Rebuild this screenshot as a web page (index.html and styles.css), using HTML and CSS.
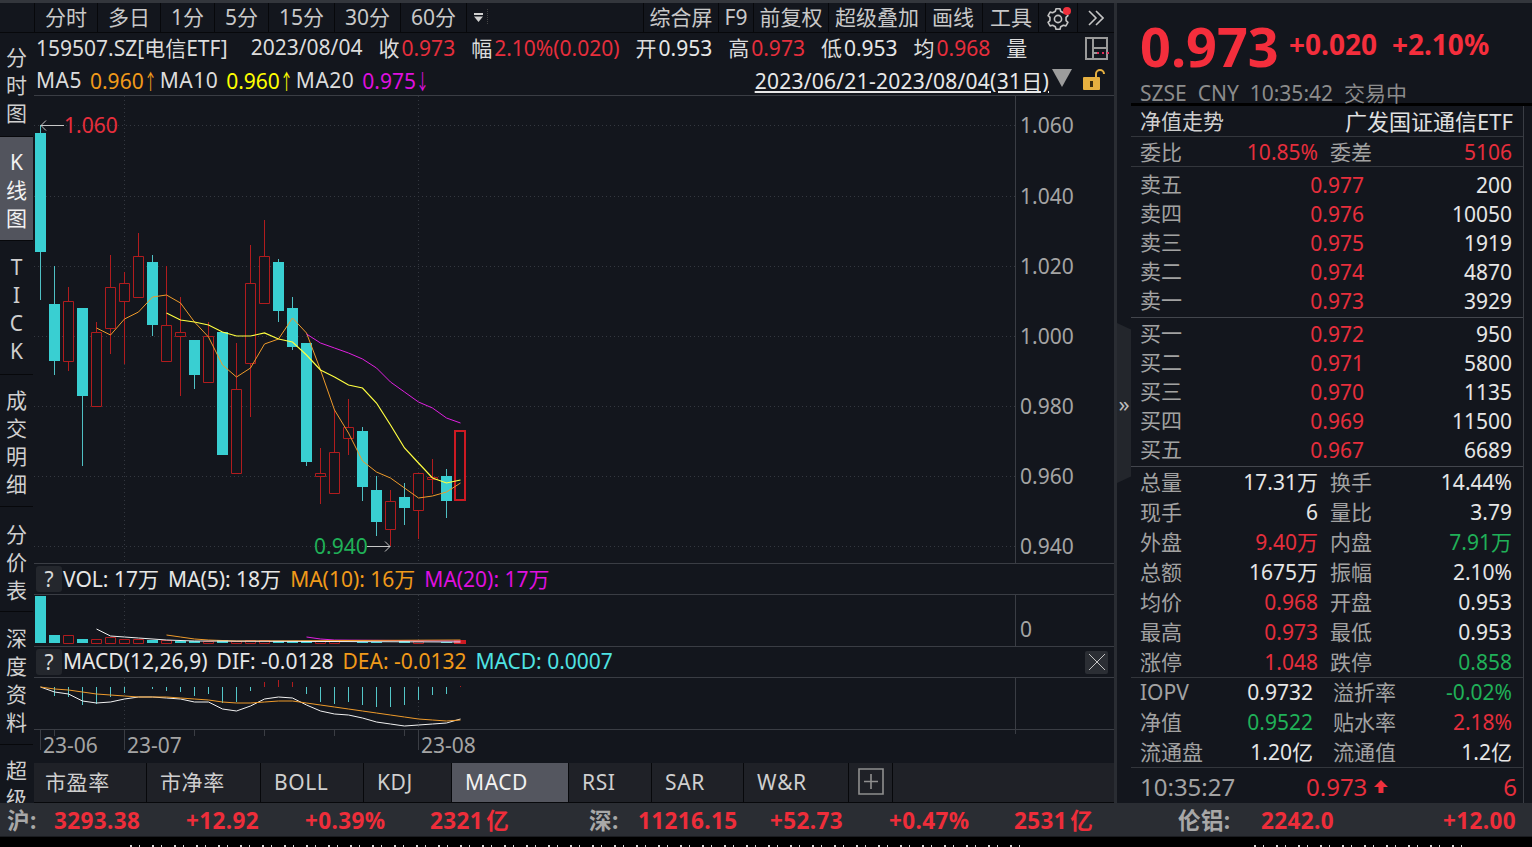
FILE: index.html
```html
<!DOCTYPE html>
<html lang="zh-CN">
<head>
<meta charset="utf-8">
<title>159507.SZ 电信ETF</title>
<link rel="stylesheet" href="styles.css">
</head>
<body>
<div class="app">
  <div class="titlestrip"></div>
  <div class="workspace">
    <nav class="sidebar">
      <div class="side-head"></div>
      <div class="side-item s-first">分<br>时<br>图</div>
      <div class="side-item active">K<br>线<br>图</div>
      <div class="side-item s-tick">T<br>I<br>C<br>K</div>
      <div class="side-item">成<br>交<br>明<br>细</div>
      <div class="side-item s-price">分<br>价<br>表</div>
      <div class="side-item s-depth">深<br>度<br>资<br>料</div>
      <div class="side-item">超<br>级</div>
    </nav>

    <section class="chart-col">
      <div class="toolbar">
        <span class="tab">分时</span><span class="tab">多日</span><span class="tab">1分</span><span class="tab">5分</span><span class="tab">15分</span><span class="tab">30分</span><span class="tab">60分</span>
        <span class="tab-more"><svg width="9" height="9" viewBox="0 0 9 9"><rect x="0" y="0" width="9" height="2" fill="#d0d0d0"/><path d="M0 3.5h9L4.5 9z" fill="#d0d0d0"/></svg></span>
        <span class="tab-dots"></span>
        <span class="tool-gap"></span>
        <span class="tab tool">综合屏</span><span class="tab tool">F9</span><span class="tab tool">前复权</span><span class="tab tool t-wide">超级叠加</span><span class="tab tool t-draw">画线</span><span class="tab tool t-tools">工具</span>
        <span class="tab icon-tab gear">
          <svg width="26" height="26" viewBox="0 0 26 26"><g transform="translate(1 2)"><path d="M14 1.69L10 1.69 9.33 4.25 6.62 5.81 4.08 5.11 2.07 8.58 3.95 10.44 3.95 13.56 2.07 15.42 4.08 18.89 6.62 18.19 9.33 19.75 10 22.31 14 22.31 14.67 19.75 17.38 18.19 19.92 18.89 21.93 15.42 20.05 13.56 20.05 10.44 21.93 8.58 19.92 5.11 17.38 5.81 14.67 4.25Z" fill="none" stroke="#c4c4c4" stroke-width="1.6" stroke-linejoin="round"/><circle cx="12" cy="12" r="3.6" fill="none" stroke="#c4c4c4" stroke-width="1.6"/></g><circle cx="22" cy="6" r="4" fill="#f0303c"/></svg>
        </span>
        <span class="tab icon-tab more">
          <svg width="16" height="16" viewBox="0 0 16 16"><path d="M1 1l7 7-7 7M8 1l7 7-7 7" fill="none" stroke="#c4c4c4" stroke-width="1.6"/></svg>
        </span>
      </div>

      <div class="inforow">
        <span class="sym">159507.SZ[电信ETF]</span>
        <span class="date">2023/08/04</span>
        <span>收<b class="red">0.973</b></span>
        <span>幅<b class="red">2.10%(0.020)</b></span>
        <span>开<b>0.953</b></span>
        <span>高<b class="red">0.973</b></span>
        <span>低<b>0.953</b></span>
        <span>均<b class="red">0.968</b></span>
        <span>量</span>
        <svg class="layout-icon" width="26" height="24" viewBox="0 0 26 24"><path d="M1 1h21v21H1zM8 1v21M8 11h14M8 16h5" fill="none" stroke="#9a9a9a" stroke-width="2"/><path d="M12 16h13" stroke="#e0305a" stroke-width="2" stroke-dasharray="2 3"/></svg>
      </div>

      <div class="marow">
        <span class="ma-name">MA5</span><span class="orange">0.960<i class="ar">↑</i></span>
        <span class="ma-name">MA10</span><span class="yellow">0.960<i class="ar">↑</i></span>
        <span class="ma-name">MA20</span><span class="magenta">0.975<i class="ar">↓</i></span>
        <span class="range">2023/06/21-2023/08/04(31日)</span>
        <svg class="tri" width="22" height="18" viewBox="0 0 22 18"><path d="M1 0h20L11 18z" fill="#9c9c9c"/></svg>
        <svg class="lock" width="24" height="22" viewBox="0 0 24 22"><path d="M13 9V5a4 4 0 0 1 8 0" fill="none" stroke="#e6b040" stroke-width="2"/><rect x="0" y="8" width="17" height="13" rx="1" fill="#e6b040"/><rect x="7" y="12" width="3" height="6" fill="#3a2c10"/></svg>
      </div>

      <svg class="pane pane-main" viewBox="34 96 1080 467" width="1080" height="467">
        <path class="grid" d="M34 125.5H1015M34 196.5H1015M34 266.5H1015M34 336.5H1015M34 406.5H1015M34 476.5H1015M34 546.5H1015M124.5 96V563M418.5 96V563"/>
        <path class="axis" d="M1015.5 96V563"/>
        <g class="axis-label">
          <text x="1020" y="133">1.060</text><text x="1020" y="204">1.040</text><text x="1020" y="274">1.020</text><text x="1020" y="344">1.000</text><text x="1020" y="414">0.980</text><text x="1020" y="484">0.960</text><text x="1020" y="554">0.940</text>
        </g>
        <path class="wick-up" d="M68.5 287V371M96.5 322V406M110.5 255V354M124.5 272V364M138.5 233V297M166.5 266V361M180.5 297V396M208.5 322V382M236.5 343V473M250.5 245V417M264.5 220V303M320.5 448V504M334.5 410V493M348.5 399V455M390.5 490V546M418.5 473V539M432.5 459V494"/>
        <path class="wick-down" d="M40.5 125V300M54.5 266V375M82.5 308V466M152.5 255V336M194.5 340V389M278.5 259V322M292.5 297V350M306.5 343V466M362.5 427V501M376.5 476V536M404.5 483V525M446.5 469V518"/>
        <path class="body-down" d="M35 133h11V252H35zM49 304h11V361H49zM77 308h11V396H77zM147 262h11V325H147zM189 340h11V375H189zM217 332h11V455H217zM273 262h11V311H273zM287 308h11V347H287zM301 343h11V462H301zM357 431h11V487H357zM371 490h11V522H371zM399 497h11V508H399zM441 476h11V501H441z"/>
        <path class="body-up" d="M63.5 301.5h10V361.5h-10zM91.5 332.5h10V406.5h-10zM105.5 287.5h10V328.5h-10zM119.5 283.5h10V301.5h-10zM133.5 256.5h10V297.5h-10zM161.5 325.5h10V361.5h-10zM175.5 332.5h10V336.5h-10zM203.5 336.5h10V382.5h-10zM231.5 389.5h10V473.5h-10zM245.5 283.5h10V363.5h-10zM259.5 256.5h10V303.5h-10zM315.5 473.5h10V476.5h-10zM329.5 452.5h10V493.5h-10zM343.5 427.5h10V438.5h-10zM385.5 501.5h10V529.5h-10zM413.5 473.5h10V510.5h-10zM427.5 477.5h10V479.5h-10z"/>
        <rect class="body-last" x="455" y="431" width="10" height="69"/>
        <polyline class="line-o" points="96.5,328 110.5,335 124.5,319 138.5,312 152.5,297 166.5,295 180.5,303 194.5,322 208.5,337 222.5,365 236.5,377 250.5,368 264.5,344 278.5,339 292.5,318 306.5,333 320.5,370 334.5,410 348.5,433 362.5,461 376.5,472 390.5,478 404.5,488 418.5,498 432.5,496 446.5,492 460.5,483"/>
        <polyline class="line-y" points="166.5,313 180.5,320 194.5,322 208.5,325 222.5,332 236.5,336 250.5,336 264.5,333 278.5,339 292.5,342 306.5,355 320.5,370 334.5,377 348.5,385 362.5,388 376.5,403 390.5,425 404.5,448 418.5,463 432.5,478 446.5,483 460.5,480"/>
        <polyline class="line-m" points="306.5,334 320.5,343 334.5,348 348.5,353 362.5,359 376.5,368 390.5,382 404.5,392 418.5,402 432.5,408 446.5,418 460.5,423"/>
        <path class="note-arrow" d="M64 125.5H41M46 120.5l-5 5 5 5"/>
        <text class="note red-fill" x="64" y="133">1.060</text>
        <text class="note green-fill" x="314" y="554">0.940</text>
        <path class="note-arrow" d="M367 546.5H390M385 541.5l5 5-5 5"/>
      </svg>

      <div class="pane-head">
        <span class="q">?</span>
        <span class="vol">VOL: 17万</span><span>MA(5): 18万</span><span class="orange">MA(10): 16万</span><span class="magenta">MA(20): 17万</span>
      </div>
      <svg class="pane pane-vol" viewBox="34 595 1080 51" width="1080" height="51">
        <path class="grid" d="M124.5 595V646M418.5 595V646"/>
        <path class="axis" d="M1015.5 595V646"/>
        <text class="axis-label" x="1020" y="637">0</text>
        <path class="body-down" d="M35 596h11V643H35zM49 635h11V643H49zM77 639h11V643H77zM147 640h11V643H147zM175 641h11V643H175zM189 641h11V643H189zM217 640h11V643H217zM273 641h11V643H273zM287 641h11V643H287zM301 641h11V643H301zM357 642h11V643H357zM371 642h11V643H371zM399 641h11V643H399zM441 642h11V643H441z"/>
        <path class="body-up" d="M63.5 635.5h10V643.5h-10zM91.5 639.5h10V643.5h-10zM105.5 637.5h10V643.5h-10zM119.5 639.5h10V643.5h-10zM133.5 639.5h10V643.5h-10zM161.5 640.5h10V643.5h-10zM203.5 641.5h10V643.5h-10zM231.5 641.5h10V643.5h-10zM245.5 640.5h10V643.5h-10zM259.5 640.5h10V643.5h-10zM315.5 641.5h10V643.5h-10zM329.5 641.5h10V643.5h-10zM413.5 641.5h10V643.5h-10z"/>
        <rect class="body-last" x="455" y="641" width="10" height="2"/>
        <polyline class="line-m" points="306.5,637 320.5,639 334.5,640 460.5,641"/>
        <polyline class="line-o" points="166.5,635 180.5,637 194.5,639 208.5,640 236.5,641 460.5,640"/>
        <polyline class="line-w" points="96.5,629 110.5,636 124.5,637 138.5,638 166.5,640 194.5,641 460.5,642"/>
      </svg>

      <div class="pane-head">
        <span class="q">?</span>
        <span class="vol">MACD(12,26,9)</span><span>DIF: -0.0128</span><span class="orange">DEA: -0.0132</span><span class="cyan">MACD: 0.0007</span>
        <span class="close"><svg width="18" height="18" viewBox="0 0 18 18"><path d="M1 1l16 16M17 1L1 17" stroke="#c4c4c4"/></svg></span>
      </div>
      <svg class="pane pane-macd" viewBox="34 678 1080 51" width="1080" height="51">
        <path class="grid" d="M124.5 678V729M418.5 678V729"/>
        <path class="axis" d="M1015.5 678V729"/>
        <path class="hist-down" d="M54.5 687V696M68.5 687V697M82.5 687V705M96.5 687V704M110.5 687V697M124.5 687V693M152.5 687V689M166.5 687V691M180.5 687V692M194.5 687V696M208.5 687V694M222.5 687V703M236.5 687V702M250.5 687V691M306.5 687V694M320.5 687V702M334.5 687V704M348.5 687V702M362.5 687V705M376.5 687V707M390.5 687V707M404.5 687V705M418.5 687V700M432.5 687V695M446.5 687V694"/>
        <path class="hist-up" d="M264.5 687V682M278.5 687V680M292.5 687V682M460.5 687V686"/>
        <polyline class="line-w" points="40.5,687 54.5,692 68.5,694 82.5,701 96.5,703 110.5,702 124.5,699 138.5,697 152.5,697 166.5,698 180.5,699 194.5,702 208.5,702 222.5,709 236.5,711 250.5,706 264.5,699 278.5,697 292.5,698 306.5,705 320.5,711 334.5,714 348.5,715 362.5,718 376.5,722 390.5,724 404.5,726 418.5,725 432.5,724 446.5,723 460.5,719"/>
        <polyline class="line-o" points="40.5,687 54.5,689 68.5,690 82.5,692 96.5,694 110.5,695 124.5,696 138.5,697 152.5,697 166.5,697 180.5,698 194.5,699 208.5,700 222.5,702 236.5,703 250.5,703 264.5,702 278.5,701 292.5,701 306.5,703 320.5,705 334.5,707 348.5,709 362.5,711 376.5,713 390.5,715 404.5,717 418.5,719 432.5,720 446.5,721 460.5,720"/>
      </svg>

      <svg class="date-axis" viewBox="34 730 1080 33" width="1080" height="34">
        <path class="axis" d="M40.5 730V750M124.5 730V750M418.5 730V750M54.5 730V736M194.5 730V736M264.5 730V736M334.5 730V736M404.5 730V736M1015.5 730V734"/>
        <g class="axis-label">
          <text x="43" y="753">23-06</text><text x="127" y="753">23-07</text><text x="421" y="753">23-08</text>
        </g>
      </svg>

      <div class="indicators">
        <span class="ind">市盈率</span><span class="ind">市净率</span><span class="ind">BOLL</span><span class="ind">KDJ</span><span class="ind on">MACD</span><span class="ind">RSI</span><span class="ind">SAR</span><span class="ind">W&amp;R</span>
        <span class="ind add"><svg width="26" height="28" viewBox="0 0 26 28"><path d="M1 2h24v25H1zM13 7v15M6 14.5h14" fill="none" stroke="#8f8f8f" stroke-width="1.6"/></svg></span>
        <span class="ind rest"></span>
      </div>
    </section>

    <div class="splitter"></div>
    <div class="collapse"><span class="handle">»</span></div>

    <aside class="quote">
      <header class="q-head">
        <div class="q-price">
          <span class="q-big">0.973</span><span class="q-chg">+0.020</span><span class="q-chg">+2.10%</span>
        </div>
        <div class="q-sub">SZSE&nbsp; CNY&nbsp; 10:35:42&nbsp; 交易中</div>
      </header>
      <div class="q-body">
        <div class="q-title"><span>净值走势</span><span class="q-name">广发国证通信ETF</span></div>
        <div class="q-ratio stat"><span class="lab">委比</span><span class="val red">10.85%</span><span class="lab lab2">委差</span><span class="val red">5106</span></div>
        <div class="book sell">
          <div class="bk"><span class="lab">卖五</span><span class="val red">0.977</span><span class="val">200</span></div>
          <div class="bk"><span class="lab">卖四</span><span class="val red">0.976</span><span class="val">10050</span></div>
          <div class="bk"><span class="lab">卖三</span><span class="val red">0.975</span><span class="val">1919</span></div>
          <div class="bk"><span class="lab">卖二</span><span class="val red">0.974</span><span class="val">4870</span></div>
          <div class="bk"><span class="lab">卖一</span><span class="val red">0.973</span><span class="val">3929</span></div>
        </div>
        <div class="book buy">
          <div class="bk"><span class="lab">买一</span><span class="val red">0.972</span><span class="val">950</span></div>
          <div class="bk"><span class="lab">买二</span><span class="val red">0.971</span><span class="val">5800</span></div>
          <div class="bk"><span class="lab">买三</span><span class="val red">0.970</span><span class="val">1135</span></div>
          <div class="bk"><span class="lab">买四</span><span class="val red">0.969</span><span class="val">11500</span></div>
          <div class="bk"><span class="lab">买五</span><span class="val red">0.967</span><span class="val">6689</span></div>
        </div>
        <div class="stats">
          <div class="stat"><span class="lab">总量</span><span class="val">17.31万</span><span class="lab lab2">换手</span><span class="val">14.44%</span></div>
          <div class="stat"><span class="lab">现手</span><span class="val">6</span><span class="lab lab2">量比</span><span class="val">3.79</span></div>
          <div class="stat"><span class="lab">外盘</span><span class="val red">9.40万</span><span class="lab lab2">内盘</span><span class="val green">7.91万</span></div>
          <div class="stat"><span class="lab">总额</span><span class="val">1675万</span><span class="lab lab2">振幅</span><span class="val">2.10%</span></div>
          <div class="stat"><span class="lab">均价</span><span class="val red">0.968</span><span class="lab lab2">开盘</span><span class="val">0.953</span></div>
          <div class="stat"><span class="lab">最高</span><span class="val red">0.973</span><span class="lab lab2">最低</span><span class="val">0.953</span></div>
          <div class="stat"><span class="lab">涨停</span><span class="val red">1.048</span><span class="lab lab2">跌停</span><span class="val green">0.858</span></div>
        </div>
        <div class="stats fund">
          <div class="stat"><span class="lab">IOPV</span><span class="val">0.9732</span><span class="lab lab2">溢折率</span><span class="val green">-0.02%</span></div>
          <div class="stat"><span class="lab">净值</span><span class="val green">0.9522</span><span class="lab lab2">贴水率</span><span class="val red">2.18%</span></div>
          <div class="stat"><span class="lab">流通盘</span><span class="val">1.20亿</span><span class="lab lab2">流通值</span><span class="val">1.2亿</span></div>
        </div>
        <div class="tick">
          <span class="tick-time">10:35:27</span>
          <span class="tick-price red">0.973</span>
          <svg class="tick-arrow" width="14" height="14" viewBox="0 0 14 14"><path d="M7 0l7 7H9.5v6h-5V7H0z" fill="#f0303c"/></svg>
          <span class="tick-vol red">6</span>
        </div>
      </div>
    </aside>
  </div>

  <footer class="status">
    <span class="st-lab">沪:</span><span>3293.38</span><span>+12.92</span><span>+0.39%</span><span>2321 亿</span>
    <span class="st-lab">深:</span><span>11216.15</span><span>+52.73</span><span>+0.47%</span><span>2531 亿</span>
    <span class="st-lab">伦铝:</span><span>2242.0</span><span>+12.00</span>
  </footer>
  <div class="below"><span class="marks m1"></span><span class="marks m2"></span></div>
</div>
</body>
</html>
```

FILE: styles.css
```css
* { box-sizing: border-box; }
html, body { margin: 0; padding: 0; height: 100%; background: #000; }
body { overflow: hidden; }

.app {
  width: 1532px;
  height: 847px;
  display: flex;
  flex-direction: column;
  font-family: "Noto Sans", "Noto Sans CJK SC", sans-serif;
  font-size: 21px;
  color: #d8d8d8;
  background: #000;
  overflow: hidden;
}
.titlestrip { height: 3px; background: #33363c; flex: none; }

.workspace {
  flex: none;
  height: 800px;
  display: grid;
  grid-template-columns: 34px 1080px 3px 14px 401px;
  background: #13161d;
}

/* sidebar */
.sidebar { overflow: hidden; background: #13161d; }
.side-head { height: 30px; border-bottom: 1px solid #07080b; }
.side-item {
  text-align: center;
  line-height: 28px;
  padding: 11px 0 8px;
  border-bottom: 1px solid #07080b;
  color: #cfcfcf;
  width: 33px;
}
.side-item.s-first { padding: 10px 0 9px; }
.side-item.active { background: #52545d; color: #f2f2f2; }
.side-item.s-tick { padding: 12px 0 9px; }
.side-item.s-price { padding: 13px 0 7px; }
.side-item.s-depth { padding: 12px 0 8px; }

/* chart column */
.chart-col { display: flex; flex-direction: column; min-width: 0; overflow: hidden; }

.toolbar {
  height: 30px;
  flex: none;
  display: flex;
  align-items: stretch;
  line-height: 28px;
  border-bottom: 1px solid #07080b;
}
.tab {
  padding: 0 10px;
  border-left: 1px solid #07080b;
  color: #c8c8c8;
  white-space: nowrap;
}
.tab-more { border-left: 1px solid #07080b; padding: 10px 0 0 7px; width: 21px; line-height: 0; }
.tab-dots { border-left: 1px dotted #444; margin: 6px 0 8px; }
.tool-gap { flex: 1; }
.tab.tool { padding: 0 5.5px; }
.tab.t-wide { padding: 0 6px; }
.tab.t-draw { padding: 0 8px 0 6px; }
.tab.t-tools { padding: 0 6px 0 7px; }
.icon-tab { padding: 0; display: flex; align-items: center; justify-content: center; }
.tab.gear { width: 39px; padding: 0; }
.tab.more { width: 37px; padding: 0; }

.inforow, .marow {
  flex: none;
  display: flex;
  align-items: center;
  padding-left: 2px;
  white-space: nowrap;
  color: #dcdcdc;
}
.inforow { height: 31px; gap: 16px; padding-bottom: 3px; }
.inforow b { font-weight: 400; margin-left: 2px; }
.inforow b:not(.red) { color: #e6e6e6; }
.inforow .date { margin-left: 7px; }
.layout-icon { margin-left: auto; margin-right: 3px; margin-top: 4px; }

.marow { border-bottom: 1px solid #3a3d44; height: 32px; }
.ma-name { margin: 0 8px 0 6px; letter-spacing: 0.5px; }
.marow .ma-name:first-child { margin-left: 0; }
.ar {
  display: inline-block;
  width: 10px;
  font-style: normal;
  transform: scaleX(0.62);
  transform-origin: 0 50%;
}
.range {
  margin-left: auto;
  text-decoration: underline;
  letter-spacing: 0.25px;
  color: #e8e8e8;
}
.tri { margin: 0 10px 4px 2px; }
.lock { margin: 0 7px 0 0; }

.red { color: #e62e3c; }
.green { color: #20b058; }
.orange { color: #f09a1a; }
.yellow { color: #ffff00; }
.magenta { color: #df10df; }
.cyan { color: #4fe3e3; }

.pane { display: block; flex: none; background: #13161d; }
.pane-main { height: 467px; }
.pane-vol, .pane-macd { height: 51px; }

.pane-head {
  height: 32px;
  flex: none;
  display: flex;
  align-items: center;
  gap: 9px;
  border-top: 1px solid #3a3d44;
  border-bottom: 1px solid #3a3d44;
  padding: 0 0 2px 2px;
  white-space: nowrap;
  color: #e6e6e6;
}
.q {
  width: 26px;
  height: 26px;
  background: #24272d;
  border-radius: 3px;
  text-align: center;
  line-height: 26px;
  margin: 2px -8px 0 0;
  color: #d8d8d8;
}
.close {
  margin: 2px 6px 0 auto;
  width: 23px;
  height: 23px;
  background: #2b2e34;
  border-radius: 2px;
  display: flex;
  align-items: center;
  justify-content: center;
}

.grid { fill: none; stroke: #343840; stroke-width: 1; stroke-dasharray: 1 3; }
.axis { fill: none; stroke: #3a3d44; stroke-width: 1; }
.axis-label { fill: #a4a4a4; font-size: 21px; }
.wick-up { fill: none; stroke: #b01c1e; stroke-width: 1; }
.wick-down { fill: none; stroke: #4fc0c4; stroke-width: 1; }
.body-down { fill: #39cfd2; }
.body-up { fill: #13161d; stroke: #b01c1e; stroke-width: 1; }
.body-last { fill: #13161d; stroke: #cc1a22; stroke-width: 2; }
.line-o, .line-y, .line-m, .line-w { fill: none; stroke-width: 1; }
.line-o { stroke: #ee9a2a; }
.line-y { stroke: #ffff40; stroke-width: 1.2; }
.line-m { stroke: #e020e0; }
.line-w { stroke: #f0f0f0; }
.hist-down { fill: none; stroke: #53c6c8; stroke-width: 1; }
.hist-up { fill: none; stroke: #b01c1e; stroke-width: 1; }
.note { font-size: 21px; }
.red-fill { fill: #e62e3c; }
.green-fill { fill: #20b058; }
.note-arrow { fill: none; stroke: #c8c8c8; stroke-width: 1; }

.date-axis { display: block; flex: none; height: 34px; border-top: 1px solid #3a3d44; }

.indicators {
  height: 40px;
  flex: none;
  display: grid;
  grid-template-columns: 113px 114px 103px 88px 117px 83px 92px 105px 44px 1fr;
  background: #1f2127;
  border-bottom: 1px solid #07080b;
}
.ind {
  border-right: 1px solid #07080b;
  padding-left: 13px;
  line-height: 38px;
  letter-spacing: 0.6px;
  color: #cfcfcf;
}
.ind:first-child { padding-left: 11px; }
.ind.on { background: #54565f; color: #f2f2f2; }
.ind.add { padding: 4px 0 0 9px; line-height: 0; }
.ind.rest { border-right: 0; }

/* splitter */
.splitter { background: #2a2d33; }
.collapse { display: flex; align-items: center; }
.handle {
  width: 14px;
  height: 160px;
  background: #23262c;
  clip-path: polygon(0 0, 100% 4%, 100% 96%, 0 100%);
  display: flex;
  align-items: center;
  justify-content: center;
  color: #bdbdbd;
  font-size: 22px;
}

/* quote panel */
.quote { display: flex; flex-direction: column; background: #13161d; }
.q-head { height: 103px; border-bottom: 3px solid #000; flex: none; padding-left: 9px; }
.q-price { display: flex; align-items: center; height: 76px; padding-top: 10px; }
.q-big { font-size: 54px; font-weight: 700; color: #f42e3c; width: 149px; line-height: 66px; }
.q-chg { font-size: 28px; font-weight: 700; color: #f42e3c; margin: 0 15px 4px 0; line-height: 40px; }
.q-sub { color: #8c8c8c; line-height: 28px; white-space: nowrap; }

.q-body {
  width: 393px;
  flex: 1;
  border-right: 1px solid #3a3d44;
  display: flex;
  flex-direction: column;
}
.q-title {
  height: 31px;
  flex: none;
  display: flex;
  justify-content: space-between;
  align-items: center;
  padding: 0 10px 2px 9px;
  border-bottom: 1px solid #33363c;
  color: #e0e0e0;
}
.q-title span:first-child { color: #cfcfcf; }
.q-name { font-size: 22px; }
.lab { color: #a2a2a2; white-space: nowrap; }
.val { color: #e6e6e6; text-align: right; white-space: nowrap; }
.val.red { color: #e62e3c; }
.val.green { color: #20b058; }

.stat {
  display: grid;
  grid-template-columns: 60px 118px 74px 120px;
  height: 30px;
  align-items: center;
  padding: 0 10px 0 9px;
}
.lab2 { padding-left: 12px; }
.q-ratio { border-bottom: 1px solid #33363c; }
.q-ratio .lab { margin-top: -2px; }
.book { flex: none; border-bottom: 1px solid #43464d; }
.sell { padding-top: 3px; padding-bottom: 2px; }
.buy { padding-top: 1px; padding-bottom: 2px; }
.bk {
  display: grid;
  grid-template-columns: 60px 164px 148px;
  height: 29px;
  align-items: center;
  padding: 0 10px 0 9px;
}
.bk .lab { margin-top: -3px; }
.stats { flex: none; border-bottom: 1px solid #33363c; }
.stats .stat { align-items: start; line-height: 30px; }
.stats.fund { height: 90px; }
.fund .stat { grid-template-columns: 60px 113px 82px 117px; line-height: 29px; }
.fund .lab2 { padding-left: 20px; }
.tick {
  flex: 1;
  display: flex;
  align-items: center;
  padding: 2px 0 0 9px;
  font-size: 24px;
}
.tick-time { color: #a2a2a2; width: 166px; }
.tick-arrow { margin: 0 0 0 7px; }
.tick-vol { margin-left: auto; margin-right: 6px; }

/* status bar */
.status {
  flex: none;
  height: 34px;
  display: grid;
  grid-template-columns: 47px 132px 119px 125px 159px 49px 132px 119px 125px 164px 83px 182px 1fr;
  padding-left: 7px;
  background: #2a2d33;
  border-bottom: 1px solid #1a1c20;
  font-size: 22.5px;
  font-weight: 700;
  letter-spacing: 0.4px;
  word-spacing: -3px;
  color: #ee2d3a;
  line-height: 35px;
  white-space: nowrap;
}
.st-lab { color: #a8a8a8; }

.below { flex: none; height: 10px; background: #000; display: flex; align-items: flex-end; }
.marks {
  height: 2px;
  background: repeating-linear-gradient(90deg, #d8d8d8 0 2px, transparent 2px 9px, #d8d8d8 9px 10px, transparent 10px 22px);
}
.m1 { margin-left: 130px; width: 890px; }
.m2 { margin-left: 234px; width: 210px; }
```
